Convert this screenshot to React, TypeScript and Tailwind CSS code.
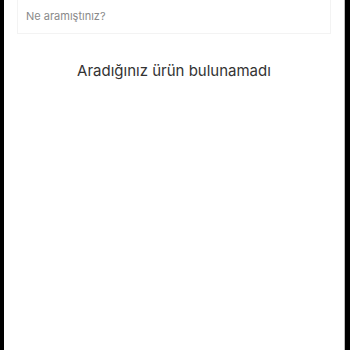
export default function App() {
  return (
    <div className="min-h-screen bg-black flex">
      <div
        className="ml-[4px] w-[341px] min-h-screen bg-white border-r border-[#bdbdbd]"
        style={{ fontFamily: '"Inter", "Noto Sans", sans-serif' }}
      >
        {/* Search */}
        <div className="mx-[13px] h-[34px] border-x border-b border-[#f3f3f3] flex items-center px-[8px]">
          <input
            type="text"
            placeholder="Ne aramıştınız?"
            className="w-full bg-transparent outline-none text-[11px] text-[#444] placeholder:text-[#8a8a8a]"
          />
        </div>

        {/* Empty state */}
        <p className="mt-[26px] text-center text-[15px] text-[#333]">
          Aradığınız ürün bulunamadı
        </p>
      </div>
    </div>
  );
}
